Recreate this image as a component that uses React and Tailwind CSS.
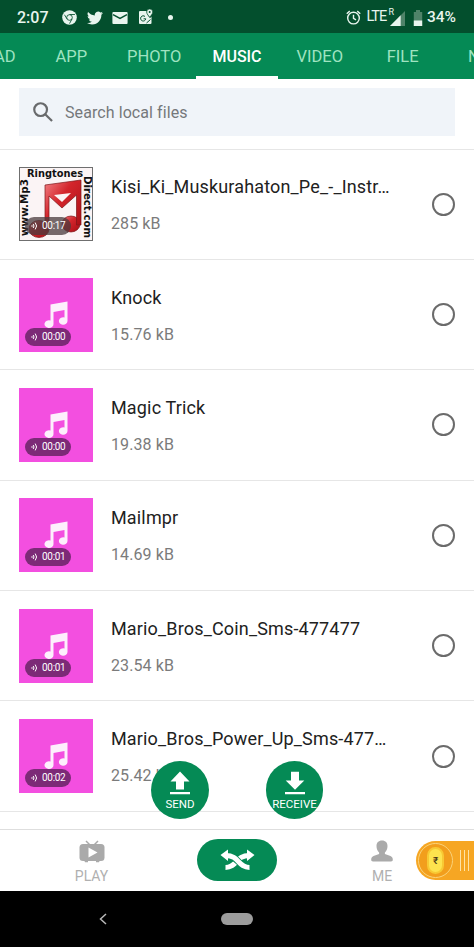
import React, { useState } from 'react';

const tabs = [
  { label: 'APP' },
  { label: 'PHOTO' },
  { label: 'MUSIC' },
  { label: 'VIDEO' },
  { label: 'FILE' },
];

const songs = [
  { id: 1, name: 'Kisi_Ki_Muskurahaton_Pe_-_Instr…', size: '285 kB', time: '00:17', cover: true },
  { id: 2, name: 'Knock', size: '15.76 kB', time: '00:00' },
  { id: 3, name: 'Magic Trick', size: '19.38 kB', time: '00:00' },
  { id: 4, name: 'Mailmpr', size: '14.69 kB', time: '00:01' },
  { id: 5, name: 'Mario_Bros_Coin_Sms-477477', size: '23.54 kB', time: '00:01' },
  { id: 6, name: 'Mario_Bros_Power_Up_Sms-477…', size: '25.42 kB', time: '00:02' },
];

const StatusBar = () => (
  <div className="flex h-[33px] shrink-0 items-center bg-[#034f2d] pl-[17px] pr-[16px] pt-[2px] text-[#e8f5ee]">
    <span className="w-[45px] text-[16px] font-medium leading-none">2:07</span>
    <svg className="h-[15px] w-[15px]" viewBox="0 0 16 16" fill="none">
      <circle cx="8" cy="8" r="7.8" fill="currentColor" />
      <circle cx="8" cy="8" r="3" stroke="#034f2d" strokeWidth=".9" />
      <path d="M8 4.800h5.800M5.300 9.500 2.600 5M10.700 9.500 8 14.500" stroke="#034f2d" strokeWidth=".9" />
    </svg>
    <svg className="ml-[10px] h-[16px] w-[16px]" viewBox="0 0 24 24" fill="currentColor">
      <path d="M23.95 4.57a10 10 0 0 1-2.82.77 4.96 4.96 0 0 0 2.16-2.72c-.95.55-2 .95-3.13 1.18a4.92 4.92 0 0 0-8.38 4.48C7.69 8.09 4.07 6.13 1.64 3.16a4.92 4.92 0 0 0 1.52 6.57 4.9 4.9 0 0 1-2.23-.61v.06a4.92 4.92 0 0 0 3.95 4.83 5 5 0 0 1-2.21.08 4.94 4.94 0 0 0 4.6 3.42A9.87 9.87 0 0 1 0 19.54a14 14 0 0 0 7.55 2.21c9.05 0 14-7.5 14-13.98 0-.21 0-.42-.02-.63a9.94 9.94 0 0 0 2.42-2.57z" />
    </svg>
    <svg className="ml-[9px] h-[12px] w-[16px]" viewBox="0 0 16 12">
      <rect x="0.4" y="0" width="15.2" height="12" rx="1" fill="currentColor" />
      <path d="M1 2.6l7 3.8 7-3.8" fill="none" stroke="#034f2d" strokeWidth="1.4" />
    </svg>
    <svg className="-mt-[2px] ml-[10px] h-[17px] w-[16px]" viewBox="0 0 16 17" fill="none">
      <path d="M2 3h6.5c-.3 3 1.7 4.800 3.500 7.300l1.500-1.800V15a1 1 0 0 1-1 1H2a1 1 0 0 1-1-1V4a1 1 0 0 1 1-1z" fill="currentColor" />
      <path d="M11.700 1a3 3 0 0 0-3 3c0 2.200 3 5 3 5s3-2.800 3-5a3 3 0 0 0-3-3z" fill="currentColor" stroke="#034f2d" strokeWidth=".6" />
      <circle cx="11.700" cy="4" r="1" fill="#034f2d" />
      <path d="M7 8.500a2.600 2.600 0 1 0 .8 2.300H5.600M8.500 15l4-3.500" stroke="#034f2d" strokeWidth="1" />
    </svg>
    <span className="ml-[14px] h-[5px] w-[5px] rounded-full bg-current" />
    <svg className="ml-auto h-[15px] w-[15px]" viewBox="0 0 16 16" fill="none" stroke="currentColor" strokeWidth="1.500">
      <circle cx="8" cy="8.600" r="6.200" />
      <path d="M8 5v4l2.700 1.600M.8 4 4 1.200M15.200 4 12 1.200" />
    </svg>
    <span className="ml-[5px] w-[20px] whitespace-nowrap text-[14.500px] leading-none tracking-[-1px]">LTE</span>
    <span className="ml-[2px] self-start pt-[6px] text-[9px] leading-none">R</span>
    <svg className="-ml-[4px] mt-[1px] h-[15px] w-[15px]" viewBox="0 0 14 14">
      <path d="M14 0v14H0z" fill="#4f8369" />
      <path d="M10 4v10H0z" fill="currentColor" />
    </svg>
    <svg className="ml-[8px] h-[16px] w-[10px]" viewBox="0 0 10 16">
      <path d="M3 0h4v2h2.200v14H.8V2H3z" fill="#4f8369" />
      <path d="M.8 10.500h8.400V16H.8z" fill="currentColor" />
    </svg>
    <span className="ml-[4px] w-[31px] whitespace-nowrap text-[15.500px] font-medium leading-none">34%</span>
  </div>
);

const MusicNote = () => (
  <svg className="absolute left-[25px] top-[23px] h-[28px] w-[24px]" viewBox="0 0 24 28" fill="#fdeffc">
    <path d="M6.500 3.500 23.500.5V20a4.300 3.800 0 1 1-3-3.600V9L9.500 10.900v12.300a4.500 3.800 0 1 1-3-3.600z" />
  </svg>
);

const RingtoneCover = () => (
  <svg className="absolute inset-0 h-full w-full" viewBox="0 0 74 74">
    <defs>
      <linearGradient id="red" x1="0" y1="0" x2="1" y2="1">
        <stop offset="0" stopColor="#f28084" />
        <stop offset="0.4" stopColor="#d3252c" />
        <stop offset="1" stopColor="#a90d14" />
      </linearGradient>
    </defs>
    <rect x="0.5" y="0.5" width="73" height="73" fill="#fbf4f5" stroke="#6f6f6f" />
    <g fill="url(#red)" stroke="#7d1519" strokeWidth=".7">
      <ellipse cx="20" cy="62" rx="10" ry="8.500" />
      <ellipse cx="52" cy="57" rx="9" ry="8" />
      <path d="M26 18 62 13v45h-4.500V28L43 41 30 29v34h-4z" />
    </g>
    <path d="M35 28l17-2-9 9z" fill="#fbf4f5" />
    <g fill="#111" fontFamily="DejaVu Sans, Verdana, sans-serif" fontWeight="700">
      <text x="8" y="9.500" fontSize="10" textLength="56" lengthAdjust="spacingAndGlyphs">Ringtones</text>
      <text transform="translate(9 69) rotate(-90)" fontSize="10" textLength="57" lengthAdjust="spacingAndGlyphs">www.Mp3</text>
      <text transform="translate(64.500 9) rotate(90)" fontSize="10" textLength="62" lengthAdjust="spacingAndGlyphs">Direct.com</text>
    </g>
  </svg>
);

const SongRow = ({ song, selected, onToggle }) => (
  <li className="flex h-[110.400px] items-center border-b border-[#e6e6e6] pl-[19px]">
    <div className={`relative h-[74px] w-[74px] shrink-0 ${song.cover ? 'bg-white' : 'bg-[#f34fe0]'}`}>
      {song.cover ? <RingtoneCover /> : <MusicNote />}
      <div className={`absolute left-[6px] top-[50px] flex h-[18px] w-[46px] items-center rounded-full pl-[6px] text-white ${song.cover ? 'bg-[#4b3b3dc0]' : 'bg-[#7c2a77]'}`}>
        <svg className="h-[8px] w-[7px] shrink-0" viewBox="0 0 7 8" fill="none" stroke="currentColor" strokeWidth="1">
          <path d="M.2 4h1.600M2.200 2q1.600 2 0 4M4.200.6q2.800 3.400 0 6.800" />
        </svg>
        <span className="ml-[4px] text-[10px] leading-none tracking-[-0.3px]">{song.time}</span>
      </div>
    </div>
    <div className="ml-[18px] h-[74px] flex-1 whitespace-nowrap">
      <p className="pt-[8px] text-[18px] leading-[24px] tracking-[0.16px] text-[#212121]">{song.name}</p>
      <p className="mt-[14px] text-[16px] leading-[22px] tracking-[0.1px] text-[#7b7b7b]">{song.size}</p>
    </div>
    <button
      onClick={onToggle}
      aria-label={song.name}
      className={`mr-[19px] h-[23px] w-[23px] shrink-0 rounded-full border-2 border-[#6b6b6b] ${selected ? 'bg-[#058a55]' : ''}`}
    />
  </li>
);

export default function App() {
  const [selected, setSelected] = useState([]);

  const toggle = (id) =>
    setSelected(selected.includes(id) ? selected.filter((s) => s !== id) : [...selected, id]);

  return (
    <main className="relative flex h-[947px] w-[474px] flex-col overflow-hidden bg-white font-[Roboto,sans-serif]">
      <StatusBar />

      <nav className="flex h-[46px] shrink-0 overflow-hidden bg-[#058a55] text-[16.500px] leading-[48px] text-[#9fe3c1]">
        <span className="-ml-[6px] w-[36px] shrink-0">AD</span>
        {tabs.map((tab) => (
          <span
            key={tab.label}
            className={`h-[46px] w-[82.800px] shrink-0 text-center ${tab.label === 'MUSIC' ? 'border-b-[3px] border-white text-[16px] font-medium text-white' : ''}`}
          >
            {tab.label}
          </span>
        ))}
        <span className="ml-[24px] shrink-0">N</span>
      </nav>

      <div className="h-[70.500px] shrink-0 border-b border-[#e6e6e6] px-[19px] pt-[9px]">
        <div className="flex h-[48px] items-center bg-[#f0f4f9] pl-[14px]">
          <svg className="h-[20px] w-[20px]" viewBox="0 0 21 21" fill="none" stroke="#686a6c" strokeWidth="2.300">
            <circle cx="8" cy="8" r="6.700" />
            <path d="m12.800 12.800 7.200 7.200" />
          </svg>
          <span className="ml-[12px] pt-[2px] text-[16px] tracking-[0.08px] text-[#75787b]">Search local files</span>
        </div>
      </div>

      <ul className="flex-1 overflow-hidden">
        {songs.map((song) => (
          <SongRow key={song.id} song={song} selected={selected.includes(song.id)} onToggle={() => toggle(song.id)} />
        ))}
      </ul>

      <button className="absolute left-[151px] top-[761px] flex h-[58px] w-[58px] flex-col items-center rounded-full bg-[#058a55] pt-[10px] text-white">
        <svg className="h-[24px] w-[20px]" viewBox="0 0 20 24" fill="currentColor">
          <path d="M10 0.500 19.500 10.500H14V18.500H6V10.500H.5zM0 21h20v2.300H0z" />
        </svg>
        <span className="mt-[3px] text-[11.500px] leading-[12px]">SEND</span>
      </button>
      <button className="absolute left-[266px] top-[761px] flex h-[58px] w-[57px] flex-col items-center rounded-full bg-[#058a55] pt-[10px] text-white">
        <svg className="h-[24px] w-[20px]" viewBox="0 0 20 24" fill="currentColor">
          <path d="M6 .8h8V9.500h5.300L10 18.800.7 9.500H6zM0 21h20v2.300H0z" />
        </svg>
        <span className="mt-[3px] text-[11.500px] leading-[12px]">RECEIVE</span>
      </button>

      <footer className="relative flex h-[62px] shrink-0 border-t border-[#dedede] bg-white text-[14px] text-[#b0b0b0]">
        <div className="flex w-[183px] flex-col items-center pt-[10px]">
          <svg className="h-[23px] w-[26px]" viewBox="0 0 26 23" fill="#aaa">
            <path d="M7 1l4 4M19 1l-4 4" stroke="#aaa" strokeWidth="1.500" />
            <rect x=".5" y="4" width="25" height="17" rx="3.500" />
            <path d="M5 20h4v2.300H6zM17 20h4l-1 2.300h-3z" />
            <path d="M9.500 7.500v10l9-5z" fill="#fff" />
          </svg>
          <span className="mt-[3px] leading-[20px]">PLAY</span>
        </div>
        <button className="ml-[14px] mt-[9px] flex h-[42px] w-[80px] items-center justify-center rounded-full bg-[#058a55]">
          <svg className="h-[22px] w-[35px]" viewBox="0 0 35 22" fill="none" stroke="#fff" strokeWidth="5">
            <path d="M5.500 18.500C17 18.500 16 6.500 29 6.500" />
            <path d="M6 6.500C19 6.500 18 18.500 29.500 18.500" stroke="#058a55" strokeWidth="6.800" />
            <path d="M6 6.500C19 6.500 18 18.500 29.500 18.500" />
            <path d="M.5 6 8 .5v11.500zM34.500 6 27 .5v11.500z" fill="#fff" stroke="none" />
          </svg>
        </button>
        <div className="ml-[65px] flex w-[80px] flex-col items-center pt-[10px]">
          <svg className="h-[22px] w-[22px]" viewBox="0 0 22 22" fill="#aaa">
            <path d="M11 .5c3.600 0 5.500 2.300 5.500 5.500 0 2.800-1 5-2.600 6.500v1.600l5.600 2c1.700.7 2.300 2 2.300 3.700 0 1.200-.6 1.700-1.800 1.700H2C.8 21.500.2 21 .2 19.800c0-1.700.6-3 2.300-3.700l5.600-2v-1.600C6.500 11 5.500 8.800 5.500 6 5.500 2.800 7.400.5 11 .5z" />
          </svg>
          <span className="mt-[4px] leading-[20px]">ME</span>
        </div>
        <div className="absolute left-[416px] top-[11px] flex h-[39px] w-[58px] items-center rounded-l-full bg-[#f6a623] pl-[2px]">
          <div className="flex h-[35px] w-[35px] shrink-0 items-center justify-center rounded-full border border-[#fad37a] bg-[#f29e1c]">
            <span className="flex h-[27px] w-[17px] items-center justify-center rounded-full border-2 border-[#f8c934] bg-[#fde34e] text-[10px] font-medium text-[#4b3a16]">₹</span>
          </div>
          <div className="ml-[7px] flex gap-[3px]">
            <span className="h-[21px] w-px bg-[#ffe2a6]" />
            <span className="h-[21px] w-px bg-[#ffe2a6]" />
            <span className="h-[21px] w-px bg-[#ffe2a6]" />
          </div>
        </div>
      </footer>

      <div className="relative flex h-[56px] shrink-0 bg-black">
        <svg className="ml-[99px] mt-[22px] h-[12px] w-[8px]" viewBox="0 0 8 12" fill="none" stroke="#b8b8b8" strokeWidth="1.500">
          <path d="M7 1 1.500 6 7 11" />
        </svg>
        <span className="ml-[114px] mt-[22px] h-[12px] w-[32px] rounded-full bg-[#9c9c9c]" />
      </div>
    </main>
  );
}
